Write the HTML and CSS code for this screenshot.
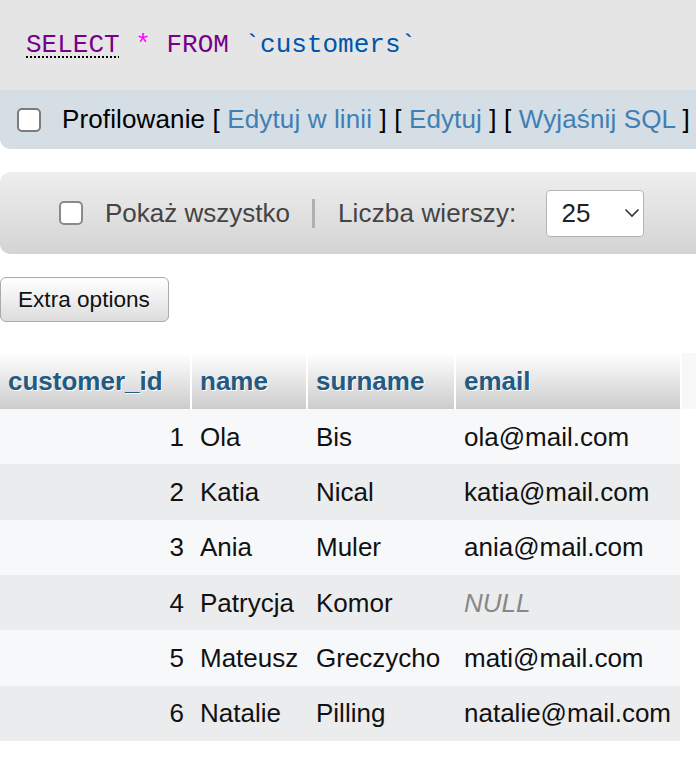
FILE: index.html
```html
<!DOCTYPE html>
<html lang="pl">
<head>
<meta charset="utf-8">
<title>customers</title>
<link rel="stylesheet" href="styles.css">
</head>
<body>
<div class="sqlbox"><code><span class="kw kw-first">SELECT</span> <span class="op">*</span> <span class="kw">FROM</span> <span class="var">`customers`</span></code></div>
<div class="tools">
  <span class="cb"></span>
  <span class="tools-text">Profilowanie [ <a href="#">Edytuj w linii</a> ] [ <a href="#">Edytuj</a> ] [ <a href="#">Wyjaśnij SQL</a> ]</span>
</div>
<div class="navbar">
  <span class="cb"></span>
  <span class="nav-label">Pokaż wszystko</span>
  <span class="sep"></span>
  <span class="nav-label rows-label">Liczba wierszy:</span>
  <span class="select"><span class="select-val">25</span><svg class="chev" width="16" height="10" viewBox="0 0 16 10"><polyline points="1.5,1.5 8,8 14.5,1.5" fill="none" stroke="#333" stroke-width="1.6"/></svg></span>
</div>
<button class="extra">Extra options</button>
<table class="data">
  <colgroup><col class="c1"><col class="c2"><col class="c3"><col class="c4"><col class="c5"></colgroup>
  <thead>
    <tr><th class="first">customer_id</th><th>name</th><th>surname</th><th>email</th><th class="ghost"></th></tr>
  </thead>
  <tbody>
    <tr class="odd"><td class="num">1</td><td>Ola</td><td>Bis</td><td>ola@mail.com</td></tr>
    <tr class="even"><td class="num">2</td><td>Katia</td><td>Nical</td><td>katia@mail.com</td></tr>
    <tr class="odd"><td class="num">3</td><td>Ania</td><td>Muler</td><td>ania@mail.com</td></tr>
    <tr class="even"><td class="num">4</td><td>Patrycja</td><td>Komor</td><td><i class="null">NULL</i></td></tr>
    <tr class="odd"><td class="num">5</td><td>Mateusz</td><td>Greczycho</td><td>mati@mail.com</td></tr>
    <tr class="even"><td class="num">6</td><td>Natalie</td><td>Pilling</td><td>natalie@mail.com</td></tr>
  </tbody>
</table>
</body>
</html>
```
FILE: styles.css
```css
html, body {
  margin: 0;
  padding: 0;
  overflow: hidden;
  background: #fff;
}
body {
  font-family: "Liberation Sans", Arial, sans-serif;
  font-size: 26px;
  color: #000;
  width: 696px;
}
.sqlbox {
  background: #e5e5e5;
  height: 90px;
  box-sizing: border-box;
  padding: 28px 0 0 26px;
}
.sqlbox code {
  font-family: "Liberation Mono", "Courier New", monospace;
  font-size: 26px;
  line-height: 30px;
  white-space: pre;
}
.kw { color: #770088; }
.kw-first {
  text-decoration: underline dotted #000;
  text-decoration-thickness: 2px;
  text-underline-offset: 4px;
}
.op { color: #ff00ff; }
.var { color: #0055aa; }

.tools {
  background: #d5dde5;
  height: 59px;
  border-bottom-left-radius: 10px;
  display: flex;
  align-items: center;
  padding-left: 17px;
  box-sizing: border-box;
  white-space: nowrap;
  overflow: hidden;
}
.tools-text { margin-left: 21px; letter-spacing: 0.13px; }
.tools a { color: #3f80b4; text-decoration: none; }

.cb {
  display: inline-block;
  width: 24px;
  height: 24px;
  box-sizing: border-box;
  border: 2px solid #7b7b7b;
  border-radius: 5px;
  background: #fff;
  flex: none;
}
.navbar {
  margin-top: 23px;
  height: 82px;
  box-sizing: border-box;
  border-radius: 10px 0 0 10px;
  background: linear-gradient(#eeeeee, #d4d4d4);
  display: flex;
  align-items: center;
  padding-left: 59px;
  white-space: nowrap;
}
.navbar .cb { border-color: #8a8a8a; }
.nav-label { color: #444; margin-left: 22px; }
.sep {
  display: inline-block;
  width: 3px;
  height: 29px;
  background: #b0b0b0;
  margin-left: 22px;
}
.rows-label { margin-left: 23px; letter-spacing: 0.15px; }
.select {
  margin-left: 30px;
  width: 98px;
  height: 47px;
  box-sizing: border-box;
  border: 1px solid #b5b5b5;
  border-radius: 4px;
  background: #fff;
  display: flex;
  align-items: center;
  padding-left: 14px;
  color: #222;
}
.chev { margin-left: 34px; }

.extra {
  display: block;
  margin: 23px 0 0 0;
  width: 169px;
  height: 45px;
  box-sizing: border-box;
  border: 1px solid #aaa;
  border-radius: 6px;
  background: linear-gradient(#ffffff, #dddddd);
  font-family: "Liberation Sans", Arial, sans-serif;
  font-size: 22.6px;
  color: #111;
  padding: 0 0 0 17px;
  text-align: left;
}

.data {
  margin-top: 31px;
  border-collapse: separate;
  border-spacing: 0;
  table-layout: fixed;
  width: 696px;
}
col.c1 { width: 190px; }
col.c2 { width: 116px; }
col.c3 { width: 148px; }
col.c4 { width: 226px; }
col.c5 { width: 16px; }
.data th {
  background: linear-gradient(#ffffff, #cccccc);
  color: #235a81;
  font-weight: bold;
  text-align: left;
  line-height: 30px;
  padding: 13px 0 13px 8px;
  border-left: 2px solid #fff;
  text-shadow: 1px 1px 0 #fff;
  white-space: nowrap;
  overflow: hidden;
}
.data th.first { border-left: 0; padding-left: 8px; }
.data th.ghost { background: #f7f8fa; padding: 0; }
.data td {
  line-height: 30px;
  padding: 12.67px 0 12.67px 8px;
  border-left: 2px solid transparent;
  white-space: nowrap;
  color: #111;
}
.data td.num {
  text-align: right;
  padding-right: 6px;
  padding-left: 0;
  border-left: 0;
}
.data tr.odd td { background: #f7f8fa; }
.data tr.even td { background: #ebecee; }
.null { color: #888; }
```
